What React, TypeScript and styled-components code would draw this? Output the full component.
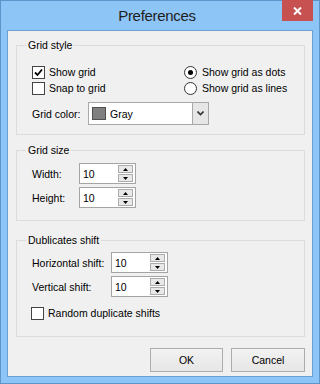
import React from 'react';
import styled, { createGlobalStyle } from 'styled-components';

const GlobalStyle = createGlobalStyle`
  html, body {
    margin: 0;
    padding: 0;
    background: #ffffff;
  }
  body {
    font-family: "Liberation Sans", Arial, sans-serif;
    font-size: 10.5px;
    color: #000;
  }
`;

const Window = styled.div`
  width: 320px;
  height: 384px;
  box-sizing: border-box;
  background: #8dc5f6;
  border: 1px solid #5f93cb;
  padding: 0 6px 6px 6px;
  display: flex;
  flex-direction: column;
`;

const TitleBar = styled.div`
  height: 29px;
  margin: 0 -6px;
  padding-right: 6px;
  display: grid;
  grid-template-columns: 1fr auto 1fr;
  align-items: start;
`;

const Title = styled.div`
  grid-column: 2;
  font-size: 15px;
  letter-spacing: -0.3px;
  line-height: 29px;
  color: #1e1e1e;
`;

const CloseButton = styled.div`
  grid-column: 3;
  justify-self: end;
  width: 31px;
  height: 21px;
  margin-top: -1px;
  background: #c75050;
  display: flex;
  align-items: center;
  justify-content: center;
`;

const Frame = styled.div`
  flex: 1;
  background: #f0f0f0;
  border: 1px solid #6e9fd4;
  padding: 7px 7px 0 8px;
  display: flex;
  flex-direction: column;
`;

const Group = styled.fieldset<{ $mt?: number }>`
  margin: ${p => p.$mt ?? 0}px 0 0 0;
  padding: 0;
  border: 1px solid #dcdcdc;
  min-width: 0;
`;

const Legend = styled.legend`
  margin-left: 9px;
  padding: 0 2px;
  height: 15px;
  line-height: 15px;
`;

const GroupBody = styled.div<{ $pt: number; $pb: number }>`
  padding: ${p => p.$pt}px 0 ${p => p.$pb}px 15px;
`;

const Options = styled.div`
  display: grid;
  grid-template-columns: 152px auto;
  grid-auto-rows: 16px;
`;

const ChoiceRow = styled.label<{ $ml?: number; $mt?: number }>`
  display: flex;
  align-items: center;
  gap: 4px;
  height: 16px;
  margin-left: ${p => p.$ml ?? 0}px;
  margin-top: ${p => p.$mt ?? 0}px;
  white-space: nowrap;
`;

const CheckBox = styled.span`
  width: 11px;
  height: 11px;
  border: 1px solid #444;
  background: #fff;
  display: flex;
  align-items: center;
  justify-content: center;
  flex-shrink: 0;
`;

const RadioCircle = styled.span`
  width: 11px;
  height: 11px;
  border: 1px solid #333;
  border-radius: 50%;
  background: #fff;
  display: flex;
  align-items: center;
  justify-content: center;
  flex-shrink: 0;
  margin-right: 1px;
`;

const RadioDot = styled.span`
  width: 5px;
  height: 5px;
  border-radius: 50%;
  background: #000;
`;

const FieldRow = styled.div<{ $labelWidth: number; $mt?: number }>`
  display: grid;
  grid-template-columns: ${p => p.$labelWidth}px auto;
  align-items: center;
  margin-top: ${p => p.$mt ?? 0}px;
`;

const FieldLabel = styled.span`
  white-space: nowrap;
`;

const Combo = styled.div`
  width: 121px;
  height: 23px;
  box-sizing: border-box;
  border: 1px solid #a8a8a8;
  background: #fff;
  display: flex;
  align-items: center;
`;

const Swatch = styled.span<{ $color: string }>`
  width: 12px;
  height: 11px;
  margin-left: 3px;
  border: 1px solid #505050;
  background: ${p => p.$color};
`;

const ComboText = styled.span`
  flex: 1;
  margin-left: 4px;
`;

const ComboButton = styled.span`
  width: 15px;
  height: 21px;
  border-left: 1px solid #a8a8a8;
  background: #e6e6e6;
  display: flex;
  align-items: center;
  justify-content: center;
`;

const SpinBox = styled.div`
  width: 57px;
  height: 21px;
  box-sizing: border-box;
  border: 1px solid #a4a4a4;
  background: #fff;
  display: flex;
  align-items: center;
  padding: 0 2px 0 3px;
`;

const SpinValue = styled.span`
  flex: 1;
`;

const SpinButtons = styled.span`
  display: flex;
  flex-direction: column;
  gap: 1px;
`;

const SpinButton = styled.span`
  width: 13px;
  height: 6px;
  border: 1px solid #acacac;
  background: #e8e8e8;
  display: flex;
  align-items: center;
  justify-content: center;
`;

const ButtonRow = styled.div`
  display: flex;
  justify-content: flex-end;
  gap: 8px;
  margin-top: 11px;
`;

const Button = styled.div<{ $w: number }>`
  width: ${p => p.$w}px;
  height: 24px;
  box-sizing: border-box;
  border: 1px solid #adadad;
  background: linear-gradient(#f2f2f2, #e6e6e6);
  display: flex;
  align-items: center;
  justify-content: center;
`;

const Check = ({ checked }: { checked?: boolean }) => (
  <CheckBox>
    {checked && (
      <svg width="9" height="9" viewBox="0 0 9 9">
        <path d="M1 4.5 L3.5 7 L8 1.5" fill="none" stroke="#000" strokeWidth="1.8" />
      </svg>
    )}
  </CheckBox>
);

const Radio = ({ checked }: { checked?: boolean }) => (
  <RadioCircle>{checked && <RadioDot />}</RadioCircle>
);

const Arrow = ({ up }: { up?: boolean }) => (
  <svg width="5" height="3" viewBox="0 0 5 3">
    <path d={up ? 'M0 3 L2.5 0 L5 3 Z' : 'M0 0 L5 0 L2.5 3 Z'} fill="#000" />
  </svg>
);

const Spin = ({ value }: { value: string }) => (
  <SpinBox>
    <SpinValue>{value}</SpinValue>
    <SpinButtons>
      <SpinButton><Arrow up /></SpinButton>
      <SpinButton><Arrow /></SpinButton>
    </SpinButtons>
  </SpinBox>
);

export default function App() {
  return (
    <>
      <GlobalStyle />
      <Window>
        <TitleBar>
          <Title>Preferences</Title>
          <CloseButton>
            <svg width="9" height="8" viewBox="0 0 9 8">
              <path d="M1 0.5 L8 7.5 M8 0.5 L1 7.5" stroke="#fff" strokeWidth="2" />
            </svg>
          </CloseButton>
        </TitleBar>
        <Frame>
          <Group>
            <Legend>Grid style</Legend>
            <GroupBody $pt={11} $pb={9}>
              <Options>
                <ChoiceRow><Check checked />Show grid</ChoiceRow>
                <ChoiceRow><Radio checked />Show grid as dots</ChoiceRow>
                <ChoiceRow><Check />Snap to grid</ChoiceRow>
                <ChoiceRow><Radio />Show grid as lines</ChoiceRow>
              </Options>
              <FieldRow $labelWidth={56} $mt={6}>
                <FieldLabel>Grid color:</FieldLabel>
                <Combo>
                  <Swatch $color="#808080" />
                  <ComboText>Gray</ComboText>
                  <ComboButton>
                    <svg width="7" height="5" viewBox="0 0 7 5">
                      <path d="M0.5 0.5 L3.5 3.5 L6.5 0.5" fill="none" stroke="#333" strokeWidth="1.6" />
                    </svg>
                  </ComboButton>
                </Combo>
              </FieldRow>
            </GroupBody>
          </Group>

          <Group $mt={8}>
            <Legend>Grid size</Legend>
            <GroupBody $pt={5} $pb={12}>
              <FieldRow $labelWidth={47}>
                <FieldLabel>Width:</FieldLabel>
                <Spin value="10" />
              </FieldRow>
              <FieldRow $labelWidth={47} $mt={3}>
                <FieldLabel>Height:</FieldLabel>
                <Spin value="10" />
              </FieldRow>
            </GroupBody>
          </Group>

          <Group $mt={12}>
            <Legend>Dublicates shift</Legend>
            <GroupBody $pt={4} $pb={15}>
              <FieldRow $labelWidth={79}>
                <FieldLabel>Horizontal shift:</FieldLabel>
                <Spin value="10" />
              </FieldRow>
              <FieldRow $labelWidth={79} $mt={3}>
                <FieldLabel>Vertical shift:</FieldLabel>
                <Spin value="10" />
              </FieldRow>
              <ChoiceRow $ml={-1} $mt={8}><Check />Random duplicate shifts</ChoiceRow>
            </GroupBody>
          </Group>

          <ButtonRow>
            <Button $w={73}>OK</Button>
            <Button $w={74}>Cancel</Button>
          </ButtonRow>
        </Frame>
      </Window>
    </>
  );
}
